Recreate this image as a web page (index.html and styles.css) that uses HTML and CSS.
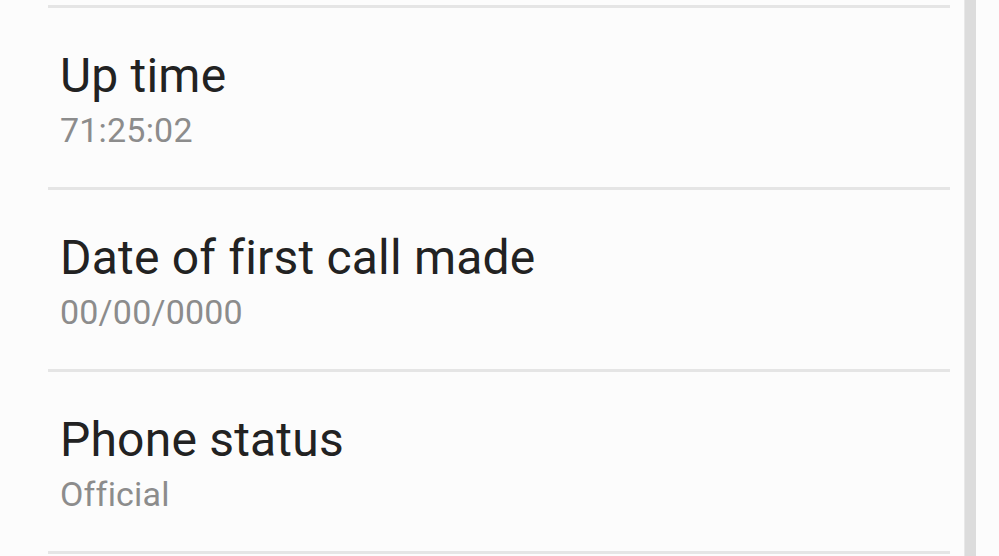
FILE: index.html
```html
<!DOCTYPE html>
<html>
<head>
<meta charset="utf-8">
<link rel="stylesheet" href="styles.css">
</head>
<body>
<div class="screen">
  <div class="list">
    <div class="divider"></div>
    <div class="item">
      <div class="title">Up time</div>
      <div class="sub">71:25:02</div>
    </div>
    <div class="divider"></div>
    <div class="item">
      <div class="title">Date of first call made</div>
      <div class="sub">00/00/0000</div>
    </div>
    <div class="divider"></div>
    <div class="item">
      <div class="title">Phone status</div>
      <div class="sub">Official</div>
    </div>
    <div class="divider"></div>
  </div>
  <div class="scrollbar"></div>
</div>
</body>
</html>
```
FILE: styles.css
```css
html, body {
  margin: 0;
  padding: 0;
  background: #fcfcfc;
}
.screen {
  width: 999px;
  height: 556px;
  overflow: hidden;
  display: flex;
  font-family: "Roboto", "Noto Sans", sans-serif;
}
.list {
  margin-left: 48px;
  width: 902px;
  padding-top: 5px;
}
.divider {
  height: 3px;
  background: #e5e5e5;
}
.item {
  height: 179px;
  box-sizing: border-box;
  padding-left: 12px;
  padding-top: 40px;
}
.title {
  font-size: 48px;
  line-height: 56px;
  letter-spacing: 0.2px;
  color: #222;
}
.sub {
  font-size: 34px;
  line-height: 40px;
  letter-spacing: 0.2px;
  color: #8c8c8c;
  margin-top: 6px;
}
.scrollbar {
  margin-left: 14px;
  width: 11px;
  height: 556px;
  background: #dcdcdc;
  border-left: 1px solid #e8e8e8;
}
```
